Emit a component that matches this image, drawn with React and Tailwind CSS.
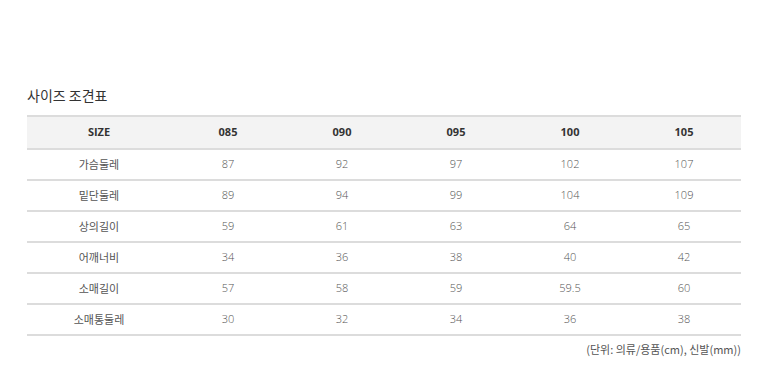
import React from 'react';

const sizes = ['085', '090', '095', '100', '105'];

const rows = [
  ['가슴둘레', '87', '92', '97', '102', '107'],
  ['밑단둘레', '89', '94', '99', '104', '109'],
  ['상의길이', '59', '61', '63', '64', '65'],
  ['어깨너비', '34', '36', '38', '40', '42'],
  ['소매길이', '57', '58', '59', '59.5', '60'],
  ['소매통둘레', '30', '32', '34', '36', '38'],
];

export default function App() {
  return (
    <div className="w-[770px] h-[387px] bg-white font-['Open_Sans','Noto_Sans_CJK_KR',sans-serif]">
      <div className="pl-[27px] pr-[29px] pt-[86px]">
        <h2 className="text-[14px] leading-[18px] text-[#333] font-['Noto_Sans_CJK_KR',sans-serif]">사이즈 조견표</h2>
        <table className="mt-[11px] w-full table-fixed border-collapse">
          <colgroup>
            <col className="w-[144px]" />
            <col />
            <col />
            <col />
            <col />
            <col />
          </colgroup>
          <thead>
            <tr className="bg-[#f3f3f3] border-t-2 border-b-2 border-[#dcdcdc] h-[33px]">
              <th className="text-[11px] font-bold text-[#333]">SIZE</th>
              {sizes.map((s) => (
                <th key={s} className="text-[11px] font-bold text-[#333]">{s}</th>
              ))}
            </tr>
          </thead>
          <tbody>
            {rows.map((r) => (
              <tr key={r[0]} className="border-b-2 border-[#dcdcdc] h-[31px]">
                {r.map((c, i) => (
                  <td key={i} className={`text-center text-[11px] text-[#555] ${i === 0 ? "font-['Noto_Sans_CJK_KR',sans-serif]" : 'font-light'}`}>
                    {c}
                  </td>
                ))}
              </tr>
            ))}
          </tbody>
        </table>
        <p className="mt-[5px] text-right text-[11px] text-[#555] font-['Noto_Sans_CJK_KR',sans-serif]">(단위: 의류/용품(cm), 신발(mm))</p>
      </div>
    </div>
  );
}
